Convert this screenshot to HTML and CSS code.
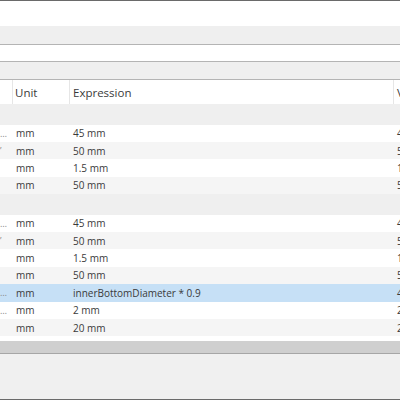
FILE: index.html
```html
<!DOCTYPE html>
<html lang="en">
<head>
    <meta charset="UTF-8">
    <title>Parameters</title>
    <link rel="stylesheet" href="styles.css">
</head>
<body>
    <div class="panel">
        <div class="top-bar"></div>
        <div class="band"></div>
        <div class="field"></div>
        <div class="band band-last"></div>

        <div class="table">
            <div class="row header">
                <div class="cell c-name"></div>
                <div class="cell c-unit">Unit</div>
                <div class="cell c-expr">Expression</div>
                <div class="cell c-val">Value</div>
            </div>

            <!-- group 1 -->
            <div class="row group"></div>
            <div class="row"><div class="cell c-name">…</div><div class="cell c-unit">mm</div><div class="cell c-expr">45 mm</div><div class="cell c-val">45.00</div></div>
            <div class="row alt"><div class="cell c-name">’</div><div class="cell c-unit">mm</div><div class="cell c-expr">50 mm</div><div class="cell c-val">50.00</div></div>
            <div class="row"><div class="cell c-name"></div><div class="cell c-unit">mm</div><div class="cell c-expr">1.5 mm</div><div class="cell c-val">1.50</div></div>
            <div class="row alt"><div class="cell c-name"></div><div class="cell c-unit">mm</div><div class="cell c-expr">50 mm</div><div class="cell c-val">50.00</div></div>

            <!-- group 2 -->
            <div class="row group"></div>
            <div class="row"><div class="cell c-name">…</div><div class="cell c-unit">mm</div><div class="cell c-expr">45 mm</div><div class="cell c-val">45.00</div></div>
            <div class="row alt"><div class="cell c-name">’</div><div class="cell c-unit">mm</div><div class="cell c-expr">50 mm</div><div class="cell c-val">50.00</div></div>
            <div class="row"><div class="cell c-name"></div><div class="cell c-unit">mm</div><div class="cell c-expr">1.5 mm</div><div class="cell c-val">1.50</div></div>
            <div class="row alt"><div class="cell c-name"></div><div class="cell c-unit">mm</div><div class="cell c-expr">50 mm</div><div class="cell c-val">50.00</div></div>
            <div class="row selected"><div class="cell c-name">…</div><div class="cell c-unit">mm</div><div class="cell c-expr">innerBottomDiameter * 0.9</div><div class="cell c-val">40.50</div></div>
            <div class="row"><div class="cell c-name">…</div><div class="cell c-unit">mm</div><div class="cell c-expr">2 mm</div><div class="cell c-val">2.00</div></div>
            <div class="row alt"><div class="cell c-name"></div><div class="cell c-unit">mm</div><div class="cell c-expr">20 mm</div><div class="cell c-val">20.00</div></div>

            <div class="table-fill"></div>
        </div>

        <div class="scrollbar"></div>
        <div class="footer"></div>
    </div>
</body>
</html>
```

FILE: styles.css
```css
* {
    margin: 0;
    padding: 0;
    box-sizing: border-box;
}

body {
    width: 400px;
    height: 400px;
    overflow: hidden;
    background-color: #f0f0f0;
    font-family: "Open Sans", "Noto Sans", sans-serif;
    color: #3a3a3a;
}

.panel {
    display: flex;
    flex-direction: column;
    height: 400px;
    border-top: 1px solid #6a6a6a;
    border-bottom: 1px solid #6a6a6a;
}

.top-bar {
    height: 25px;
    background-color: #fff;
}

.band {
    height: 19px;
    background-color: #efefef;
    border-bottom: 1px solid #b4b4b4;
}

.band-last {
    height: 18px;
}

.field {
    height: 17px;
    background-color: #fff;
    border-bottom: 1px solid #b4b4b4;
}

.table {
    display: flex;
    flex-direction: column;
    width: 420px;
    background-color: #fff;
}

.row {
    display: flex;
    height: 17.4px;
    align-items: center;
    font-size: 10px;
    background-color: #fff;
}

.row.alt {
    background-color: #f5f5f5;
}

.row.selected {
    background-color: #c6e0f6;
}

.row.group {
    height: 20.5px;
    background-color: #efefef;
}

.row.header {
    height: 24px;
    font-size: 11.5px;
    align-items: stretch;
}

.cell {
    white-space: nowrap;
    overflow: hidden;
}

.header .cell {
    display: flex;
    align-items: center;
    border-right: 1px solid #e6e6e6;
}

.c-name {
    width: 13px;
    padding-left: 0;
    color: #888;
    font-size: 9px;
}

.c-unit {
    width: 57px;
    padding-left: 3px;
}

.c-expr {
    width: 324px;
    padding-left: 3px;
}

.c-val {
    width: 26px;
    padding-left: 3px;
}

.header .c-unit {
    padding-left: 2px;
}

.table-fill {
    height: 5px;
}

.scrollbar {
    height: 13px;
    background-color: #cfcfcf;
    border-bottom: 1px solid #a6a6a6;
}

.footer {
    flex: 1;
    background-color: #f0f0f0;
}
```
